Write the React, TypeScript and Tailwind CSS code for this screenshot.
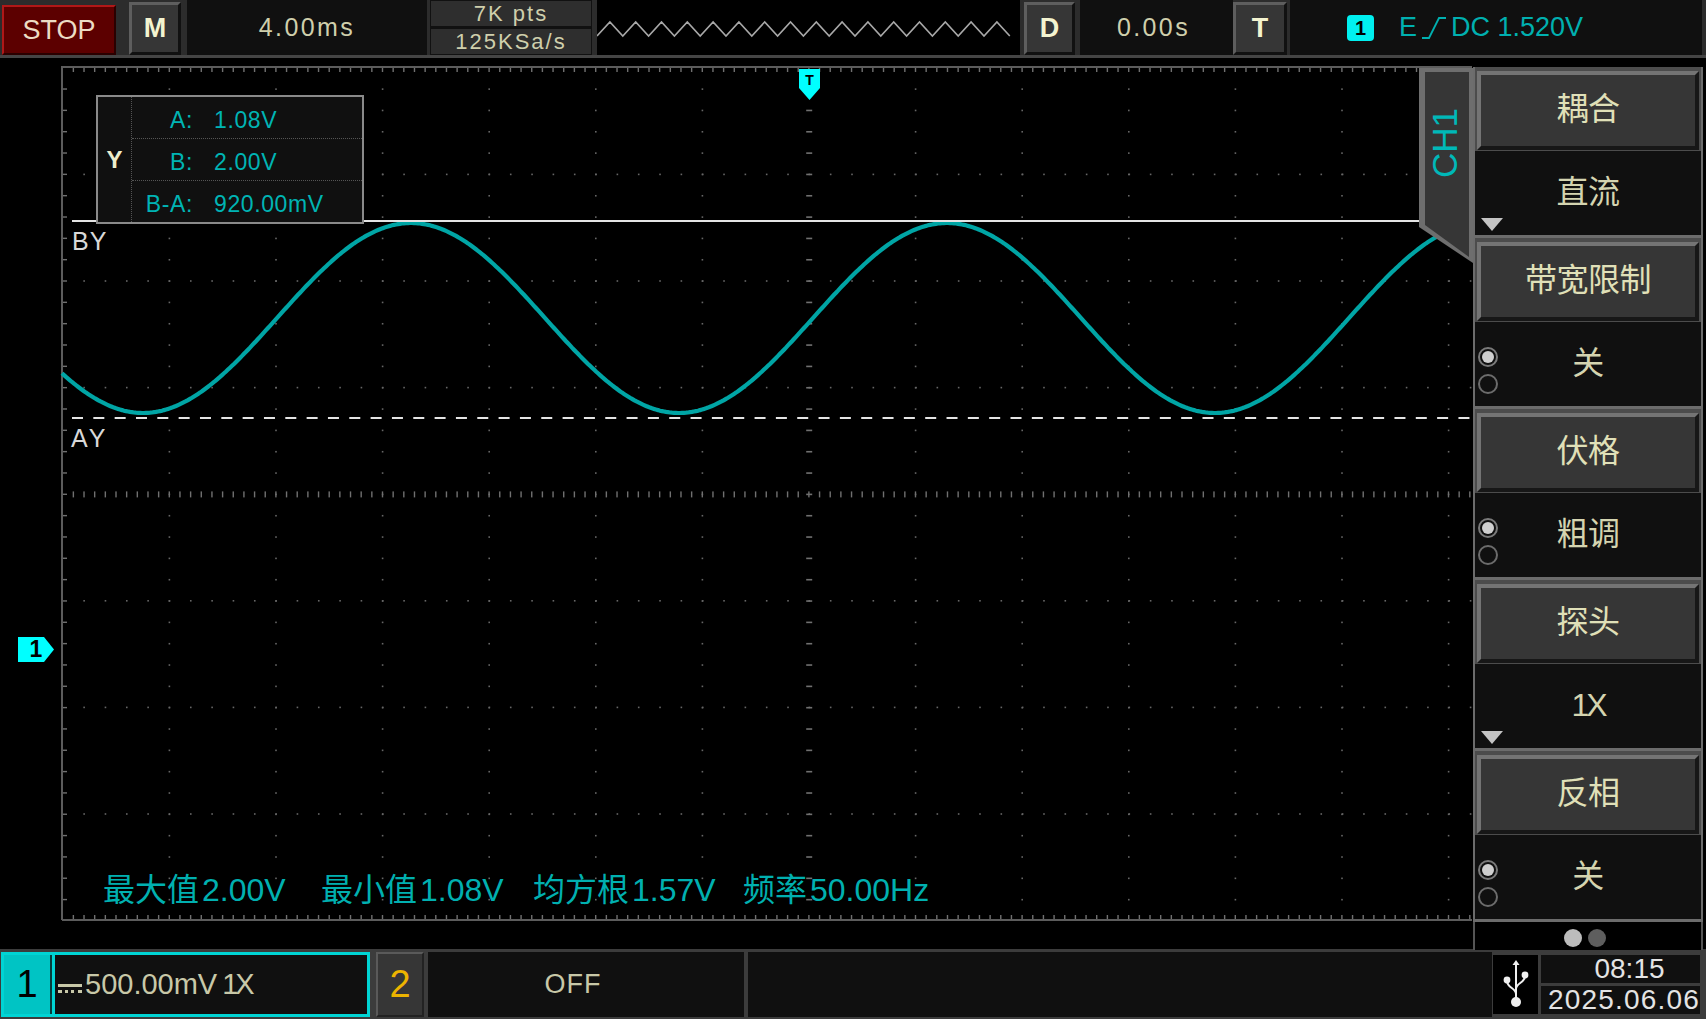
import React from 'react';

const TICK = 10.66;
const MINOR = 21.33;
const DIV = 106.6;
const LEFT = 62;
const TOP = 67;
const RIGHT = 1472;
const BOTTOM = 920;

function range(start: number, end: number, step: number): number[] {
  const out: number[] = [];
  for (let v = start; v <= end + 0.01; v += step) out.push(v);
  return out;
}

function wavePath(): string {
  const pts: string[] = [];
  for (let x = LEFT; x <= 1445; x += 2) {
    const y = 318 - 95 * Math.cos((2 * Math.PI * (x - 411)) / 536);
    pts.push(`${x},${y.toFixed(1)}`);
  }
  return pts.join(' ');
}

function zigzag(): string {
  const pts: string[] = [];
  let up = true;
  for (let x = 597; x <= 1020; x += 12.9) {
    pts.push(`${x.toFixed(1)},${up ? 36 : 22}`);
    up = !up;
  }
  return pts.join(' ');
}

function Plot() {
  const cols = range(LEFT + DIV, RIGHT, DIV);
  const rows = range(TOP + DIV, BOTTOM - 5, DIV);
  const centerX = LEFT + 7 * DIV;
  const centerY = TOP + 4 * DIV;
  return (
    <svg className="absolute left-0 top-0" width="1473" height="949" viewBox="0 0 1473 949">
      {cols.filter(x => Math.abs(x - centerX) > 1).map(x =>
        range(TOP + MINOR, BOTTOM - 5, MINOR).map(y => (
          <rect key={`${x}-${y}`} x={x} y={y} width="1.6" height="1.6" fill="#666" />
        ))
      )}
      {rows.filter(y => Math.abs(y - centerY) > 1).map(y =>
        range(LEFT + MINOR, RIGHT, MINOR).map(x => (
          <rect key={`h${x}-${y}`} x={x} y={y} width="1.6" height="1.6" fill="#666" />
        ))
      )}
      {range(LEFT + TICK, RIGHT, TICK).map(x => (
        <g key={x} fill="#707070">
          <rect x={x} y={centerY - 2} width="1.4" height="6" />
          <rect x={x} y={TOP} width="1.4" height="5" />
          <rect x={x} y={BOTTOM - 5} width="1.4" height="5" />
        </g>
      ))}
      {range(TOP + MINOR, BOTTOM - 5, MINOR).map(y => (
        <rect key={y} x={centerX - 2} y={y} width="6" height="1.6" fill="#707070" />
      ))}
      {range(TOP + MINOR, BOTTOM, MINOR).map(y => (
        <rect key={y} x={LEFT} y={y} width="5" height="1.4" fill="#707070" />
      ))}
      <path d={`M${LEFT} ${BOTTOM}V${TOP}H${RIGHT}M${LEFT} ${BOTTOM}H${RIGHT}`} stroke="#5c5c5c" strokeWidth="2" fill="none" />
      <polyline points={wavePath()} fill="none" stroke="#00a5a5" strokeWidth="4.2" />
      <line x1="72" y1="221" x2="1420" y2="221" stroke="#e4e4e4" strokeWidth="2" />
      <line x1="72" y1="418" x2="1472" y2="418" stroke="#e4e4e4" strokeWidth="2" strokeDasharray="11 10.33" />
      <polygon points="1419,68 1473,68 1473,263 1419,227" fill="#6e6e6e" />
      <polygon points="1425,72 1469,72 1469,257 1425,225" fill="#363636" />
      <polygon points="799,69 820,69 820,88 809.5,100 799,88" fill="#00ffff" />
      <polygon points="18,637 44,637 54,649.5 44,662 18,662" fill="#00ffff" />
    </svg>
  );
}

function Readout() {
  const rows = [
    ['A:', '1.08V'],
    ['B:', '2.00V'],
    ['B-A:', '920.00mV'],
  ];
  return (
    <div className="absolute left-[96px] top-[95px] flex h-[129px] w-[268px] border-2 border-[#8a8a8a] bg-[#101010]">
      <div className="flex w-[34px] items-center justify-center border-r border-dotted border-[#555] text-[24px] font-bold text-[#eeeecc]">
        Y
      </div>
      <div className="flex flex-1 flex-col">
        {rows.map(([k, v], i) => (
          <div
            key={k}
            className={`flex flex-1 items-center pt-[5px] text-[23px] tracking-[0.6px] text-[#00b4b4] ${i < 2 ? 'border-b border-dotted border-[#555]' : ''}`}
          >
            <span className="w-[61px] text-right">{k}</span>
            <span className="ml-[21px]">{v}</span>
          </div>
        ))}
      </div>
    </div>
  );
}

function Measure({ label, value, x }: { label: string; value: string; x: string }) {
  return (
    <div className={`absolute top-[870px] flex items-baseline text-[32px] leading-[40px] text-[#00b0b0] ${x}`}>
      <span>{label}</span>
      <span className="ml-[3px]">{value}</span>
    </div>
  );
}

function PlotArea() {
  return (
    <div className="relative h-[891px] w-[1473px]">
      <div className="absolute left-0 top-[-58px] h-[949px] w-[1473px]">
        <Plot />
        <Readout />
        <span className="absolute left-[72px] top-[227px] text-[25px] leading-[28px] tracking-[1px] text-[#d8d8d8]">BY</span>
        <span className="absolute left-[71px] top-[424px] text-[25px] leading-[28px] tracking-[3px] text-[#d8d8d8]">AY</span>
        <span className="absolute left-[799px] top-[72px] w-[21px] text-center text-[14px] font-bold leading-[16px] text-black">T</span>
        <span className="absolute left-[18px] top-[637px] w-[36px] text-center text-[23px] font-bold leading-[25px] text-black">1</span>
        <span className="absolute left-[1415px] top-[132px] w-[60px] origin-center -rotate-90 text-center text-[35px] leading-[32px] text-[#00b8b8]">CH1</span>
        <Measure label="最大值" value="2.00V" x="left-[103px]" />
        <Measure label="最小值" value="1.08V" x="left-[321px]" />
        <Measure label="均方根" value="1.57V" x="left-[533px]" />
        <Measure label="频率" value="50.00Hz" x="left-[743px]" />
      </div>
    </div>
  );
}

function Radios() {
  return (
    <div className="absolute left-[3px] top-[25px] flex flex-col gap-[7px]">
      <span className="flex h-[20px] w-[20px] items-center justify-center rounded-full border-2 border-[#7a7a7a]">
        <span className="h-[12px] w-[12px] rounded-full bg-[#cfcfcf]" />
      </span>
      <span className="h-[20px] w-[20px] rounded-full border-2 border-[#6c6c6c]" />
    </div>
  );
}

function Section({ title, value, radio, arrow }: { title: string; value: string; radio?: boolean; arrow?: boolean }) {
  return (
    <div className="flex h-[171px] flex-col bg-[#6c6c6c] px-[2px] pb-[3px]">
      <div className="bg-[#4c4c4c] px-[2px] pb-[1px] pt-[4px]">
        <div className="flex h-[79px] items-center justify-center border-[4px] border-b-[#171717] border-l-[#747474] border-r-[#171717] border-t-[#747474] bg-[#363636] pb-[3px] text-[32px] tracking-[-0.5px] text-[#e0e0b8]">
          {title}
        </div>
      </div>
      <div className={`relative flex flex-1 items-center justify-center bg-[#101010] pb-[3px] text-[32px] text-[#d4d4b0] ${value === '1X' ? 'tracking-[-3px]' : 'tracking-[-0.5px]'}`}>
        {radio && <Radios />}
        {value}
        {arrow && (
          <svg className="absolute bottom-[4px] left-[6px]" width="22" height="13" viewBox="0 0 22 13">
            <polygon points="0,0 22,0 11,13" fill="#c4c4c4" />
          </svg>
        )}
      </div>
    </div>
  );
}

function Sidebar() {
  return (
    <div className="w-[230px] pt-[9px]">
      <Section title="耦合" value="直流" arrow />
      <Section title="带宽限制" value="关" radio />
      <Section title="伏格" value="粗调" radio />
      <Section title="探头" value="1X" arrow />
      <Section title="反相" value="关" radio />
      <div className="flex h-[28px] items-center justify-center gap-[6px] border-x-2 border-[#555] bg-black pr-[6px] pt-[3px]">
        <span className="h-[18px] w-[18px] rounded-full bg-[#bcbcbc]" />
        <span className="h-[18px] w-[18px] rounded-full bg-[#5e5e5e]" />
      </div>
    </div>
  );
}

function BevelButton({ label, className }: { label: string; className: string }) {
  return (
    <div className={`flex h-[53px] items-center justify-center border-[3px] border-b-[#111] border-l-[#5e5e5e] border-r-[#111] border-t-[#5e5e5e] bg-[#363636] text-[27px] font-bold text-[#f4f4d0] ${className}`}>
      {label}
    </div>
  );
}

function TopBar() {
  return (
    <div className="flex h-[58px] items-start border-b-[3px] border-[#454545] bg-[#2c2c2c] text-[#cfcfac]">
      <div className="ml-[2px] mt-[5px] flex h-[50px] w-[114px] items-center justify-center border-2 border-b-[#2a0000] border-l-[#b01818] border-r-[#2a0000] border-t-[#b01818] bg-[#5c0000] text-[27px] text-[#ecdcc4]">
        STOP
      </div>
      <BevelButton label="M" className="ml-[13px] mt-[2px] w-[52px]" />
      <div className="ml-[6px] flex h-[55px] w-[240px] items-center justify-center bg-[#101010] text-[25px] tracking-[2.4px]">
        4.00ms
      </div>
      <div className="ml-[3px] flex h-[55px] w-[162px] flex-col gap-[3px] bg-[#111] p-[1px] text-[22px] tracking-[2px]">
        <div className="flex h-[25px] items-center justify-center bg-[#2e2e2e] leading-none">7K pts</div>
        <div className="flex h-[25px] items-center justify-center bg-[#2e2e2e] leading-none">125KSa/s</div>
      </div>
      <svg className="ml-[5px] bg-black" width="423" height="55" viewBox="597 0 423 55">
        <polyline points={zigzag()} fill="none" stroke="#a8a8a8" strokeWidth="1.6" />
      </svg>
      <BevelButton label="D" className="ml-[4px] mt-[2px] w-[51px]" />
      <div className="ml-[5px] flex h-[55px] w-[153px] items-center justify-center bg-[#101010] pr-[6px] text-[25px] tracking-[2.4px]">
        0.00s
      </div>
      <BevelButton label="T" className="mt-[2px] w-[54px]" />
      <div className="ml-[3px] flex h-[55px] w-[412px] items-center bg-[#101010] pl-[57px] text-[27px] text-[#00b0b0]">
        <span className="flex h-[26px] w-[27px] items-center justify-center rounded-[4px] bg-[#00f0f0] text-[20px] font-bold text-black">1</span>
        <span className="ml-[25px]">E</span>
        <svg className="ml-[5px]" width="24" height="24" viewBox="0 0 24 24">
          <polyline points="0,22 7,22 17,2 24,2" fill="none" stroke="#00b0b0" strokeWidth="1.8" />
        </svg>
        <span className="ml-[5px]">DC 1.520V</span>
      </div>
    </div>
  );
}

function UsbIcon() {
  return (
    <svg width="30" height="50" viewBox="0 0 30 50" fill="none" stroke="#f0f0f0" strokeWidth="2">
      <path d="M15 3V40" />
      <path d="M15 0l3.5 5h-7z" fill="#f0f0f0" stroke="none" />
      <circle cx="15" cy="42" r="5" fill="#f0f0f0" stroke="none" />
      <path d="M6 21c0 7 9 7 9 13" />
      <path d="M24 16c0 7-9 7-9 13" />
      <circle cx="6" cy="20" r="3.4" fill="#f0f0f0" stroke="none" />
      <circle cx="24" cy="15" r="3.4" fill="#f0f0f0" stroke="none" />
    </svg>
  );
}

function BottomBar() {
  return (
    <div className="flex h-[70px] items-stretch bg-[#3c3c3c] pb-[2px] pt-[3px] text-[#c8c8a8]">
      <div className="ml-[1px] flex w-[369px] border-[3px] border-[#00d4d4] bg-[#101010]">
        <div className="flex w-[48px] items-center justify-center border-r-2 border-[#063c3c] bg-[#00c4c4] text-[38px] text-black">1</div>
        <div className="flex flex-1 items-center border-l-[3px] border-[#00d4d4] text-[29px]">
          <div className="ml-[3px] flex w-[24px] flex-col gap-[3px] pt-[8px]">
            <span className="h-[3px] bg-[#c8c8a8]" />
            <span className="h-[3px] border-b-[3px] border-dotted border-[#c8c8a8]" />
          </div>
          <span className="ml-[3px]">500.00mV</span>
          <span className="ml-[5px] tracking-[-3px]">1X</span>
        </div>
      </div>
      <div className="ml-[6px] flex w-[48px] items-center justify-center border-2 border-b-[#222] border-l-[#5a5a5a] border-r-[#222] border-t-[#5a5a5a] bg-[#363636] text-[38px] text-[#ecb400]">2</div>
      <div className="ml-[4px] flex w-[316px] items-center justify-center bg-[#101010] pr-[26px] text-[27px] tracking-[1px]">OFF</div>
      <div className="ml-[4px] w-[744px] bg-[#101010]" />
      <div className="ml-[1px] my-[3px] flex w-[45px] items-center justify-center bg-black"><UsbIcon /></div>
      <div className="ml-[3px] my-[3px] flex w-[159px] flex-col gap-[3px] text-[28px] leading-none text-[#e4e4e4]">
        <div className="flex flex-1 items-center justify-center bg-[#101010] pl-[18px]">08:15</div>
        <div className="flex flex-1 items-center justify-center bg-[#101010] pl-[7px] tracking-[1.2px]">2025.06.06</div>
      </div>
    </div>
  );
}

export default function App() {
  return (
    <div className="h-[1019px] w-[1706px] overflow-hidden bg-black [font-family:'Liberation_Sans','Noto_Sans_CJK_SC',sans-serif]">
      <TopBar />
      <div className="flex h-[891px]">
        <PlotArea />
        <Sidebar />
      </div>
      <BottomBar />
    </div>
  );
}
